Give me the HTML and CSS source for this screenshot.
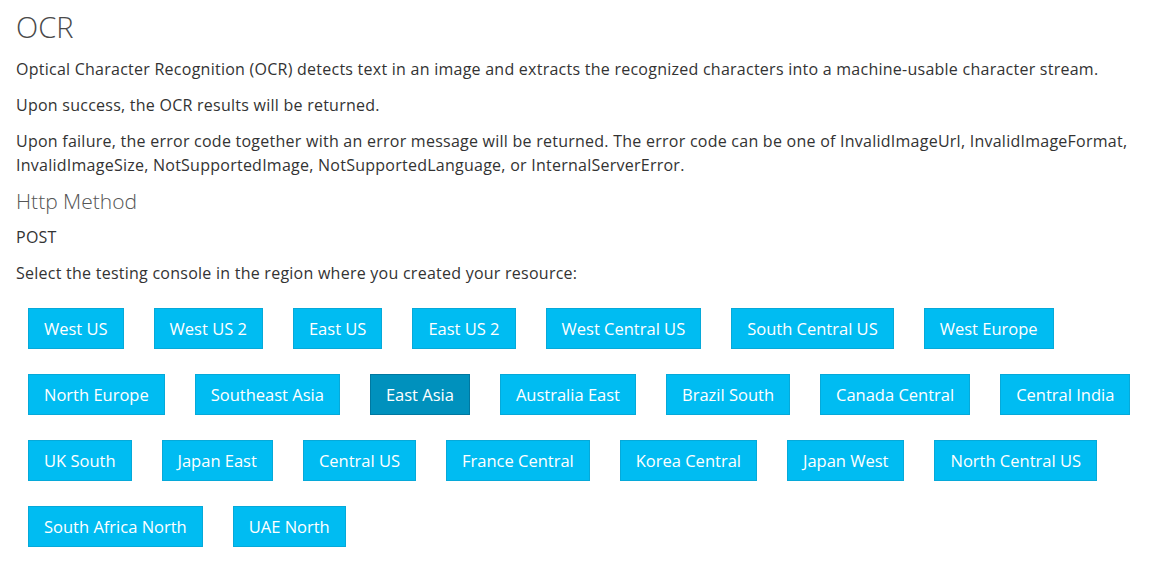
FILE: index.html
```html
<!DOCTYPE html>
<html lang="en">
<head>
<meta charset="utf-8">
<title>OCR</title>
<link rel="stylesheet" href="styles.css">
</head>
<body>
<h1 class="title">OCR</h1>
<p class="text">Optical Character Recognition (OCR) detects text in an image and extracts the recognized characters into a machine-usable character stream.</p>
<p class="text">Upon success, the OCR results will be returned.</p>
<p class="text">Upon failure, the error code together with an error message will be returned. The error code can be one of InvalidImageUrl, InvalidImageFormat, InvalidImageSize, NotSupportedImage, NotSupportedLanguage, or InternalServerError.</p>
<h2 class="subtitle">Http Method</h2>
<p class="text">POST</p>
<p class="text">Select the testing console in the region where you created your resource:</p>
<div class="regions">
  <a class="region">West US</a>
  <a class="region">West US 2</a>
  <a class="region">East US</a>
  <a class="region">East US 2</a>
  <a class="region">West Central US</a>
  <a class="region">South Central US</a>
  <a class="region">West Europe</a>
  <a class="region">North Europe</a>
  <a class="region">Southeast Asia</a>
  <a class="region region-active">East Asia</a>
  <a class="region">Australia East</a>
  <a class="region">Brazil South</a>
  <a class="region">Canada Central</a>
  <a class="region">Central India</a>
  <a class="region">UK South</a>
  <a class="region">Japan East</a>
  <a class="region">Central US</a>
  <a class="region">France Central</a>
  <a class="region">Korea Central</a>
  <a class="region">Japan West</a>
  <a class="region">North Central US</a>
  <a class="region">South Africa North</a>
  <a class="region">UAE North</a>
</div>
</body>
</html>
```
FILE: styles.css
```css
html, body {
  margin: 0;
  padding: 0;
  background: #ffffff;
}
body {
  padding: 0 16px;
  font-family: "Open Sans", "Noto Sans", sans-serif;
  color: #333333;
}
.title {
  margin: 7px 0 10px;
  font-size: 29px;
  line-height: 40px;
  font-weight: 300;
  color: #4a4a4a;
}
.text {
  margin: 0 0 12px;
  font-size: 16px;
  line-height: 24px;
  letter-spacing: 0.25px;
}
.subtitle {
  margin: 0 0 12px;
  font-size: 21px;
  line-height: 24px;
  font-weight: 300;
  color: #555555;
}
.regions {
  display: flex;
  flex-wrap: wrap;
  gap: 25px 30px;
  padding-left: 12px;
  margin-top: 23px;
}
.region {
  display: block;
  padding: 9px 15px;
  font-size: 16.5px;
  line-height: 21px;
  color: #ffffff;
  background: #00bcf2;
  border: 1px solid #06a9d9;
  text-decoration: none;
}
.region-active {
  background: #0091bd;
  border-color: #0078a0;
}
```
